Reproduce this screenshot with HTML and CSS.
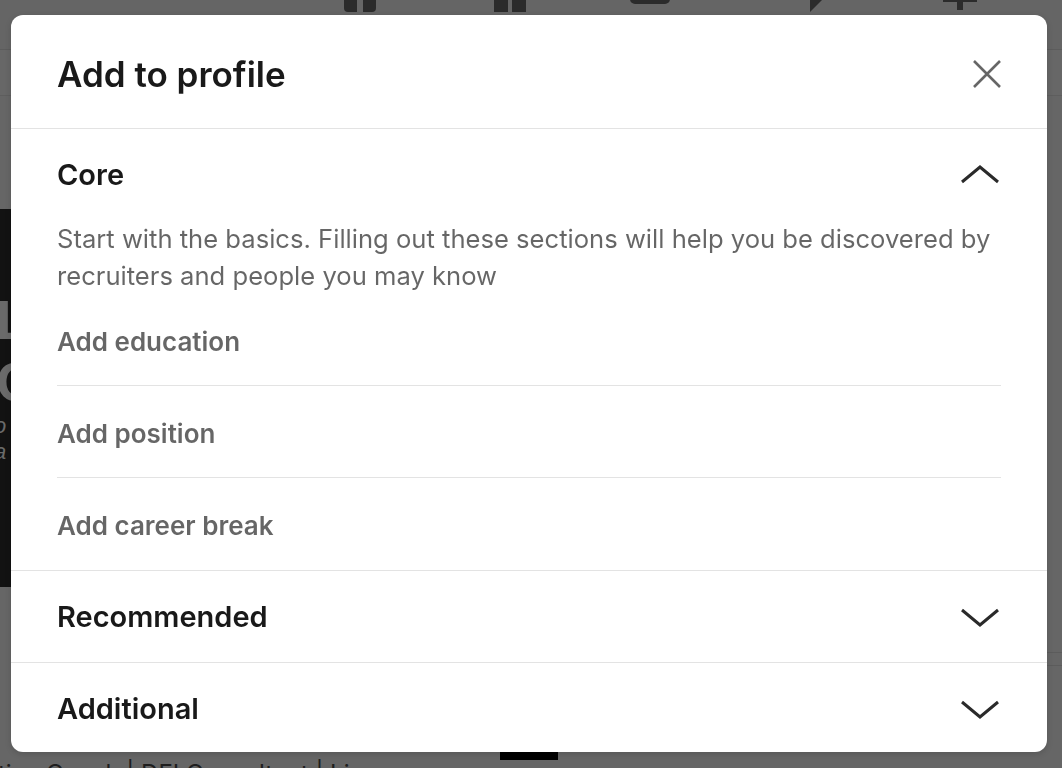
FILE: index.html
```html
<!DOCTYPE html>
<html lang="en">
<head>
    <meta charset="UTF-8">
    <meta name="viewport" content="width=device-width, initial-scale=1.0">
    <title>Add to profile</title>
    <link rel="stylesheet" href="styles.css">
</head>
<body>

    <!-- dimmed page behind the dialog -->
    <div class="page">
        <header class="nav">
            <svg class="nav-icon icon-home" viewBox="0 0 40 24"><path d="M4 0h32v10a4 4 0 0 1-4 4H8a4 4 0 0 1-4-4z"/><rect x="17" y="0" width="6" height="14" fill="#666"/></svg>
            <svg class="nav-icon icon-network" viewBox="0 0 40 24"><rect x="4" y="0" width="14" height="14"/><rect x="22" y="0" width="14" height="14"/></svg>
            <svg class="nav-icon icon-jobs" viewBox="0 0 40 24"><path d="M0 0h40v2a5 5 0 0 1-5 5H5a5 5 0 0 1-5-5z"/></svg>
            <svg class="nav-icon icon-msg" viewBox="0 0 40 24"><path d="M10 0h14L10 14z"/></svg>
            <svg class="nav-icon icon-bell" viewBox="0 0 40 24"><rect x="3" y="0" width="34" height="4"/><rect x="17" y="0" width="6" height="12"/></svg>
        </header>

        <div class="strip"></div>

        <main class="main">
            <div class="side">
                <div class="hero">
                    <span class="hero-big">L</span>
                    <span class="hero-big">C</span>
                    <span class="hero-small">o</span>
                    <span class="hero-small">a</span>
                </div>
            </div>
            <div class="right-col">
                <div class="right-card"></div>
            </div>
        </main>

        <div class="bottom">
            <div class="bar"></div>
            <p class="headline">tian Coach | DEI Consultant | Li</p>
        </div>
    </div>

    <div class="modal" role="dialog">
        <div class="modal-header">
            <h1>Add to profile</h1>
            <button class="close" aria-label="Dismiss">
                <svg viewBox="0 0 32 32"><path d="M3 3L29 29M29 3L3 29"/></svg>
            </button>
        </div>

        <section class="group open">
            <div class="group-head">
                <h2>Core</h2>
                <svg class="chevron" viewBox="0 0 40 20"><path d="M2 17L20 2L38 17"/></svg>
            </div>
            <p class="group-desc">Start with the basics. Filling out these sections will help you be discovered by recruiters and people you may know</p>
            <ul class="items">
                <li>Add education</li>
                <li>Add position</li>
                <li>Add career break</li>
            </ul>
        </section>

        <section class="group">
            <div class="group-head">
                <h2>Recommended</h2>
                <svg class="chevron" viewBox="0 0 40 20"><path d="M2 3L20 18L38 3"/></svg>
            </div>
        </section>

        <section class="group last">
            <div class="group-head">
                <h2>Additional</h2>
                <svg class="chevron" viewBox="0 0 40 20"><path d="M2 3L20 18L38 3"/></svg>
            </div>
        </section>
    </div>

</body>
</html>
```

FILE: styles.css
```css
* {
    box-sizing: border-box;
}

body {
    margin: 0;
    height: 768px;
    overflow: hidden;
    background: #666666;
    font-family: Inter, "Liberation Sans", Arial, sans-serif;
}

/* background page (already dimmed) */
.page {
    height: 768px;
    display: flex;
    flex-direction: column;
}

.nav {
    height: 50px;
    display: flex;
    background: #656565;
    border-bottom: 1px solid #5c5c5c;
}

.nav-icon {
    width: 40px;
    height: 24px;
    fill: #2b2b2b;
    margin-top: -2px;
}

.icon-home { margin-left: 340px; }
.icon-network { margin-left: 110px; }
.icon-jobs { margin-left: 100px; margin-top: -3px; }
.icon-msg { margin-left: 130px; }
.icon-bell { margin-left: 100px; }

.strip {
    height: 46px;
    background: #676767;
    border-bottom: 1px solid #5e5e5e;
}

.main {
    flex: 1;
    display: flex;
    justify-content: space-between;
    padding-top: 113px;
}

.side {
    width: 300px;
}

.hero {
    height: 378px;
    background: #121212;
    display: flex;
    flex-direction: column;
    padding-top: 80px;
    color: #6a6a6a;
    font-family: "Liberation Sans", Arial, sans-serif;
    font-weight: bold;
}

.hero-big {
    font-size: 56px;
    line-height: 62px;
    margin-left: -4px;
}

.hero-small {
    font-size: 22px;
    line-height: 26px;
    font-weight: normal;
    font-style: italic;
    margin-left: -6px;
}

.right-col {
    width: 20px;
}

.right-card {
    height: 14px;
    margin-top: 443px;
    border-top: 1px solid #5c5c5c;
    border-bottom: 1px solid #5c5c5c;
}

.bottom {
    height: 16px;
}

.bar {
    width: 58px;
    height: 8px;
    margin-left: 500px;
    background: #000;
}

.headline {
    margin: -1px 0 0 -2px;
    font-size: 24px;
    color: #1e1e1e;
    white-space: nowrap;
}

/* dialog */
.modal {
    position: fixed;
    top: 15px;
    left: 11px;
    width: 1036px;
    height: 737px;
    background: #fff;
    border-radius: 12px;
    overflow: hidden;
    box-shadow: 0 2px 6px rgba(0, 0, 0, 0.15);
    color: rgba(0, 0, 0, 0.9);
}

.modal-header {
    height: 114px;
    display: flex;
    align-items: center;
    justify-content: space-between;
    padding: 0 44px 0 46px;
    border-bottom: 1px solid #e3e3e3;
}

.modal-header h1 {
    margin: 0;
    font-size: 35px;
    font-weight: 600;
    padding-top: 4px;
}

.close {
    width: 32px;
    height: 32px;
    padding: 0;
    border: none;
    background: none;
    margin-top: 4px;
}

.close svg {
    width: 32px;
    height: 32px;
    stroke: #666;
    stroke-width: 2.6;
    fill: none;
}

.group {
    border-bottom: 1px solid #e3e3e3;
}

.group.last {
    border-bottom: none;
}

.group-head {
    height: 91px;
    display: flex;
    align-items: center;
    justify-content: space-between;
    padding: 0 46px;
}

.group-head h2 {
    margin: 0;
    font-size: 29px;
    font-weight: 600;
}

.chevron {
    width: 40px;
    height: 20px;
    stroke: #2a2a2a;
    stroke-width: 3;
    fill: none;
    margin-right: 1px;
}

.group-desc {
    margin: 0;
    padding: 0 46px;
    font-size: 25.6px;
    line-height: 37px;
    color: rgba(0, 0, 0, 0.6);
}

.items {
    list-style: none;
    margin: 0;
    padding: 0 46px;
}

.items li {
    height: 92px;
    display: flex;
    align-items: center;
    font-size: 26px;
    font-weight: 600;
    color: rgba(0, 0, 0, 0.6);
    border-bottom: 1px solid #e3e3e3;
    padding-top: 3px;
}

.items li:last-child {
    border-bottom: none;
}
```
